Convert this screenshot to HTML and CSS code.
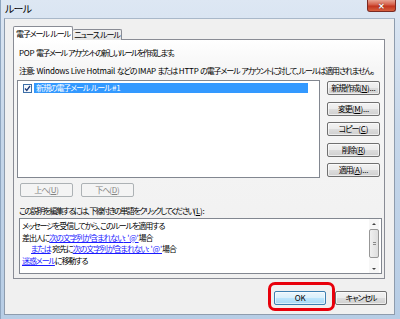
FILE: index.html
```html
<!DOCTYPE html>
<html>
<head>
    <meta charset="UTF-8">
    <title>ルール</title>
    <link rel="stylesheet" href="styles.css">
</head>
<body>
    <div class="window">
        <div class="titlebar">
            <span class="title">ルール</span>
            <span class="close">&#x2715;</span>
        </div>
        <div class="client">
            <div class="tabs">
                <span class="tab active">電子メール<span class="en"> </span>ルール</span>
                <span class="tab">ニュース<span class="en"> </span>ルール</span>
            </div>
            <div class="panel">
                <p class="intro"><span class="en">POP </span>電子メール<span class="en"> </span>アカウントの新しいルールを作成します。</p>
                <p class="note">注意<span class="en">: Windows Live Hotmail </span>などの<span class="en"> IMAP </span>または<span class="en"> HTTP </span>の電子メール<span class="en"> </span>アカウントに対して、ルールは適用されません。</p>

                <div class="rules-row">
                    <div class="rule-list">
                        <div class="rule-item">
                            <svg class="check" width="9" height="9" viewBox="0 0 9 9">
                                <rect x="0.5" y="0.5" width="8" height="8" fill="#f4f8fc" stroke="#3d6fa8"/>
                                <path d="M2 4.5 L3.8 6.5 L7 2" fill="none" stroke="#1f3b7a" stroke-width="1.3"/>
                            </svg>
                            <span class="rule-name">新規の電子メール<span class="en"> </span>ルール<span class="en"> #1</span></span>
                        </div>
                    </div>
                    <div class="side-buttons">
                        <button class="btn">新規作成<span class="en">(<u>N</u>)...</span></button>
                        <button class="btn">変更<span class="en">(<u>M</u>)...</span></button>
                        <button class="btn">コピー<span class="en">(<u>C</u>)</span></button>
                        <button class="btn">削除<span class="en">(<u>R</u>)</span></button>
                        <button class="btn">適用<span class="en">(<u>A</u>)...</span></button>
                    </div>
                </div>

                <div class="move-row">
                    <button class="btn disabled">上へ<span class="en">(<u>U</u>)</span></button>
                    <button class="btn disabled">下へ<span class="en">(<u>D</u>)</span></button>
                </div>

                <p class="label">この説明を編集するには、下線付きの単語をクリックしてください<span class="en">(<u>L</u>):</span></p>

                <div class="desc">
                    <div class="desc-text">
                        <div>メッセージを受信してから、このルールを適用する</div>
                        <div>差出人に<a href="#">次の文字列が含まれない<span class="en">: '@'</span></a>場合</div>
                        <div class="indent"><a href="#">または</a><span class="en"> </span>宛先に<a href="#">次の文字列が含まれない<span class="en">: '@'</span></a>場合</div>
                        <div><a href="#">迷惑メール</a>に移動する</div>
                    </div>
                    <div class="scrollbar">
                        <span class="arrow up"></span>
                        <span class="thumb"><span class="grip"></span></span>
                        <span class="track"></span>
                        <span class="arrow down"></span>
                    </div>
                </div>
            </div>

            <div class="footer">
                <button class="btn default"><span class="en">OK</span></button>
                <button class="btn">キャンセル</button>
                <span class="ring"></span>
            </div>
        </div>
    </div>
</body>
</html>
```

FILE: styles.css
```css
html,
body {
    margin: 0;
    padding: 0;
    height: 100%;
}

body {
    font-family: "Noto Sans CJK JP", "Noto Sans", sans-serif;
    font-size: 8px;
    font-feature-settings: "palt";
    letter-spacing: -1.1px;
    color: #000;
    overflow: hidden;
}

p {
    margin: 0;
}

/* latin runs keep their natural width, kana/kanji are packed tighter */
.en {
    letter-spacing: -0.2px;
    white-space: pre;
}

.window {
    width: 400px;
    height: 319px;
    box-sizing: border-box;
    padding: 0 5px 4px 3px;
    display: flex;
    flex-direction: column;
    background: linear-gradient(#dde7f3, #c6d7ea 40%, #b7cde5);
    border-left: 1px solid #8fa6c0;
}

.titlebar {
    height: 18px;
    display: flex;
    align-items: flex-start;
}

.title {
    margin: 3px 0 0 1px;
    font-size: 10px;
    line-height: 12px;
    letter-spacing: -0.8px;
}

.close {
    margin-left: auto;
    margin-right: -1px;
    width: 29px;
    height: 12px;
    line-height: 12px;
    text-align: center;
    color: #fff;
    font-size: 8px;
    font-weight: bold;
    letter-spacing: 0;
    border: 1px solid #7a2a22;
    border-top: 0;
    border-radius: 0 0 3px 3px;
    background: linear-gradient(#e8a493, #d45b45 45%, #c2351f 55%, #d8603f);
    text-shadow: 0 0 1px #400;
    box-sizing: border-box;
}

.client {
    flex: 1;
    background: #f0f0f0;
    border: 1px solid #8e9cad;
    border-top-color: #a9b8c9;
    padding: 8px 0 0 8px;
    display: flex;
    flex-direction: column;
}

.tabs {
    display: flex;
    align-items: flex-end;
    height: 13px;
    margin-bottom: -1px;
    position: relative;
    z-index: 1;
}

.tab {
    height: 10px;
    line-height: 10px;
    width: 48px;
    text-align: center;
    border: 1px solid #898c95;
    border-bottom: 0;
    border-left: 0;
    background: linear-gradient(#f2f2f2, #e3e3e3);
    border-radius: 2px 2px 0 0;
    white-space: nowrap;
}

.tab.active {
    height: 13px;
    line-height: 13px;
    width: 58px;
    border-left: 1px solid #898c95;
    background: #fff;
}

.panel {
    width: 370px;
    height: 238px;
    border: 1px solid #898c95;
    background: linear-gradient(#fff, #f6f6f6 28px, #f0f0f0);
    display: flex;
    flex-direction: column;
}

.intro {
    margin: 7px 0 0 5px;
    line-height: 12px;
    letter-spacing: -1.6px;
}

.note {
    margin: 6px 0 0 5px;
    line-height: 12px;
    white-space: nowrap;
}

.rules-row {
    display: flex;
    margin: 3px 0 0 3px;
}

.rule-list {
    border: 1px solid #828790;
    background: #fff;
    padding: 2px 0 0 5px;
    width: 296px;
    height: 94px;
}

.rule-item {
    display: flex;
    align-items: center;
    height: 10px;
}

.check {
    flex: none;
}

.rule-name {
    margin-left: 2px;
    width: 274px;
    height: 10px;
    line-height: 10px;
    background: #3399ff;
    color: #fff;
    padding-left: 2px;
    box-sizing: border-box;
}

.side-buttons {
    display: flex;
    flex-direction: column;
    gap: 6.5px;
    margin: 1px 0 0 7px;
}

.btn {
    font: inherit;
    font-feature-settings: "palt";
    letter-spacing: -1.1px;
    width: 53px;
    height: 14px;
    padding: 0;
    line-height: 12px;
    border: 1px solid #707070;
    border-radius: 2px;
    color: #000;
    background: linear-gradient(#f2f2f2, #ebebeb 50%, #dddddd 50%, #cfcfcf);
    box-shadow: inset 0 0 0 1px rgba(255, 255, 255, .6);
    white-space: nowrap;
}

.btn.disabled {
    color: #838383;
    border-color: #adb2b5;
    background: #f4f4f4;
    box-shadow: none;
}

.btn.default {
    border-color: #3c7fb1;
    background: linear-gradient(#eaf6fd, #d9f0fc 50%, #bee6fd 50%, #a7d9f5);
}

.move-row {
    display: flex;
    gap: 8px;
    margin: 5px 0 0 6px;
}

.label {
    margin: 8px 0 0 5px;
    line-height: 12px;
    letter-spacing: -1.5px;
}

.desc {
    display: flex;
    width: 361px;
    height: 54px;
    margin: 1px 0 0 5px;
    border: 1px solid #828790;
    background: #fff;
}

.desc-text {
    flex: 1;
    padding: 1px 0 0 2px;
    line-height: 11.7px;
}

.desc-text .indent {
    padding-left: 9px;
}

.desc-text a {
    color: #1a1aff;
    text-decoration: underline;
}

.scrollbar {
    width: 10px;
    margin-right: 2px;
    display: flex;
    flex-direction: column;
    align-items: center;
    background: #f7f7f7;
}

.arrow {
    height: 9px;
    width: 10px;
    display: flex;
    align-items: center;
    justify-content: center;
}

.arrow::after {
    content: "";
    border-left: 2px solid transparent;
    border-right: 2px solid transparent;
}

.arrow.up::after {
    border-bottom: 2px solid #444;
}

.arrow.down::after {
    border-top: 2px solid #444;
}

.thumb {
    width: 8px;
    height: 27px;
    margin-top: 1px;
    border: 1px solid #979797;
    border-radius: 2px;
    background: linear-gradient(90deg, #f0f0f0, #dedede);
    display: flex;
    align-items: center;
    justify-content: center;
}

.grip {
    width: 3px;
    height: 4px;
    background: repeating-linear-gradient(#8a8a8a 0 1px, transparent 1px 2px);
}

.track {
    flex: 1;
}

.footer {
    position: relative;
    display: flex;
    justify-content: flex-end;
    gap: 9px;
    margin: 12px 7px 0 0;
}

.footer .btn {
    width: 52px;
}

.ring {
    position: absolute;
    left: 255px;
    top: -9px;
    width: 61px;
    height: 23px;
    border: 3px solid #e8000b;
    border-radius: 7px;
}
```
